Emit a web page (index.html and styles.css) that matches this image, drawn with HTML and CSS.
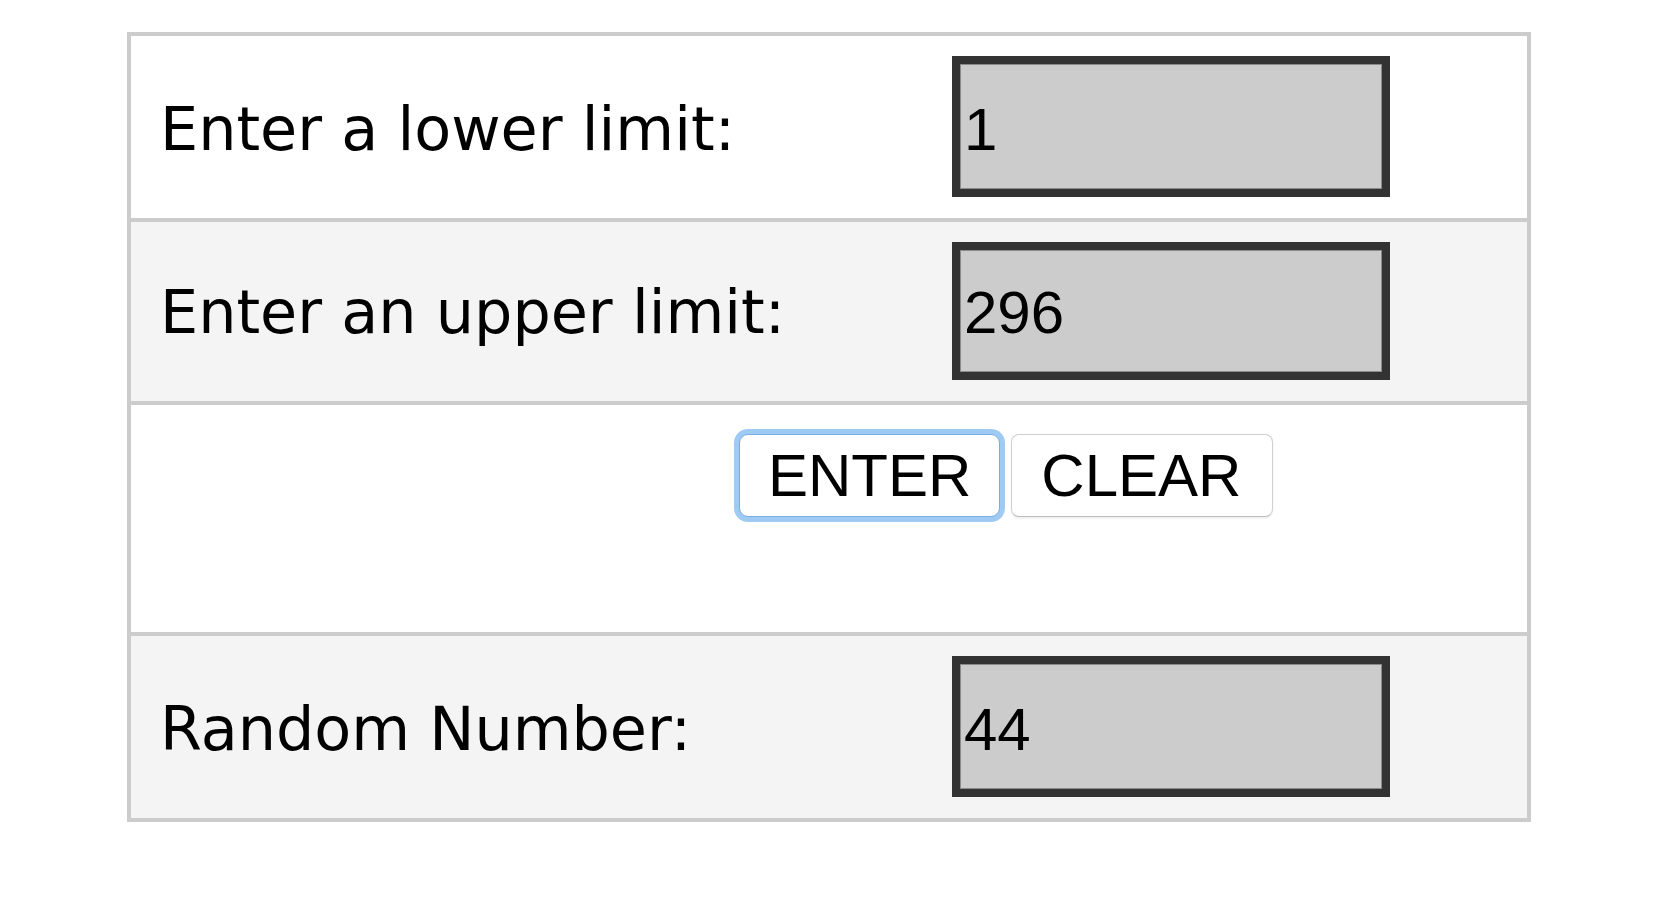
FILE: index.html
```html
<!DOCTYPE html>
<html lang="en">
<head>
    <meta charset="UTF-8">
    <meta name="viewport" content="width=device-width, initial-scale=1.0">
    <title>Random Number Generator</title>
    <link rel="stylesheet" href="styles.css">
</head>
<body>
    <form class="calc" id="calc">
        <div class="row">
            <label class="label" for="lower">Enter a lower limit:</label>
            <div class="field"><input type="text" id="lower" class="box" value="1"></div>
        </div>
        <div class="row">
            <label class="label" for="upper">Enter an upper limit:</label>
            <div class="field"><input type="text" id="upper" class="box short" value="296"></div>
        </div>
        <div class="row actions">
            <button type="button" class="btn focused" id="enterBtn">ENTER</button>
            <button type="reset" class="btn" id="clearBtn">CLEAR</button>
        </div>
        <div class="row">
            <label class="label" for="result">Random Number:</label>
            <div class="field"><input type="text" id="result" class="box" value="44" readonly></div>
        </div>
    </form>
</body>
</html>
```

FILE: styles.css
```css
body {
    margin: 0;
    background: #fff;
    color: #000;
}
.calc {
    width: 1404px;
    box-sizing: border-box;
    margin: 32px 0 0 127px;
    border: 4px solid #ccc;
}
.row {
    display: flex;
    align-items: baseline;
    border-bottom: 4px solid #ccc;
    background: #fff;
}
.row:last-child {
    border-bottom: none;
}
.row:nth-child(even) {
    background: #f4f4f4;
}
.label {
    flex: 0 0 791px;
    box-sizing: border-box;
    padding-left: 29px;
    font-family: "DejaVu Sans", Verdana, sans-serif;
    font-size: 60.4px;
}
.field {
    padding: 20px 0 21px 30px;
}
.box {
    display: block;
    width: 438px;
    height: 141px;
    box-sizing: border-box;
    margin: 0;
    padding: 6px 4px 0;
    border: 8px solid #333;
    background: #ccc;
    box-shadow: inset 0 0 0 1px #8a8a8a;
    font-family: "Liberation Sans", Arial, sans-serif;
    font-size: 60px;
    color: #000;
    outline: none;
}
.box.short {
    height: 138px;
    padding-top: 2px;
}
.actions {
    align-items: flex-start;
    gap: 11px;
    padding: 29px 0 115px 608px;
}
.btn {
    padding: 6px 28px;
    font-family: "Liberation Sans", Arial, sans-serif;
    font-size: 60px;
    line-height: 69px;
    color: #000;
    background: #fff;
    border: 1px solid #cfcfcf;
    border-bottom-color: #bdbdbd;
    border-radius: 8px;
    box-shadow: 0 2px 2px rgba(0, 0, 0, 0.06);
    cursor: pointer;
}
#clearBtn {
    padding: 6px 31px 6px 29px;
}
.btn.focused {
    border-color: #79ade6;
    box-shadow: 0 0 0 5px #9fcaf4;
    border-radius: 9px;
}
```
